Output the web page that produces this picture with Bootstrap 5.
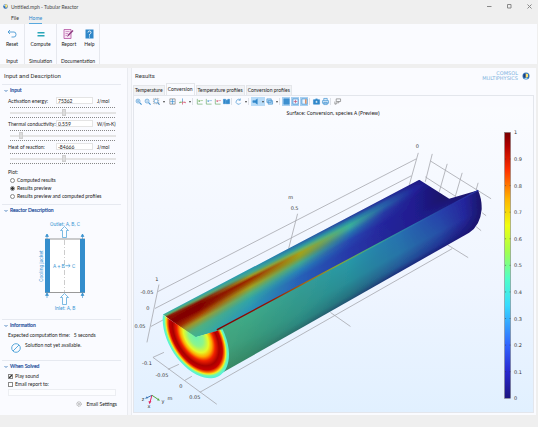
<!DOCTYPE html>
<html lang="en">
<head>
<meta charset="utf-8">
<meta name="viewport" content="width=device-width, initial-scale=1">
<title>Untitled.mph - Tubular Reactor</title>
<link rel="stylesheet" href="https://cdn.jsdelivr.net/npm/bootstrap@5.3.0/dist/css/bootstrap.min.css">
<style>
body{font-family:Lato,"Liberation Sans",sans-serif;font-size:5px;line-height:8px;color:#222;background:#efefef}
svg{display:block;overflow:visible}
button,input{font:inherit;color:inherit}
.plain{border:0;background:none;padding:0}
.titlebar{height:13px;padding:0 0 0 3px;gap:3px;color:#444}
.winbtn{width:17px;height:12px}
.menu{height:11px;padding-left:11px;gap:10px}
.menu a{color:#333;text-decoration:none;line-height:11px}
.menu a.current{color:#2b86cc;border-bottom:1px solid #58a8de}
.ribbon{background:#fafbff;height:40px;margin-right:1px}
.group{border-right:1px solid #e6e8ee;padding:5px 0 0}
.group .tools{height:28px}
.group .tools button{display:flex;flex-direction:column;align-items:center;line-height:8px}
.group .tools svg{margin-bottom:1px}
.g1{width:25px}.g2{width:32px}.g3{width:43px}
.side{width:127px;background:#fafbff;padding:0 6px 4px 2px;flex:none}
.divider{width:5px;flex:none;background:#f6f7fb;border-left:1px solid #e9ebf0;border-right:1px solid #e9ebf0}
.work{background:#fafbff;padding:0 2px 2px 1px;margin-right:2px;min-width:0}
.h-main{font-family:Roboto,sans-serif;font-size:6px;line-height:14px;margin:0;padding:1px 0 0 2px;font-weight:400;color:#333}
.side .h-main{padding-bottom:1px}
.sect{font-size:5px;line-height:9px;color:#2c55a0;margin:0;padding:1px 0 1px 2px;border-top:1px solid #e6e9f0;font-weight:400;-webkit-text-stroke:.2px #2c55a0}
.sect svg{display:inline-block;margin-right:2px}
.field{padding:0 2px 0 6px;height:9px}
.field label{width:48px;white-space:nowrap}
.field input{width:37px;height:7px;border:1px solid #e4e4e4;background:#fff;padding:0 1px;line-height:5px}
.field span{margin-left:4px}
.slide{margin:2px 5px 1px 8px;height:11px}
.dots{height:1px;background:repeating-linear-gradient(90deg,#888 0 1px,transparent 1px 2px)}
.slide input{appearance:none;display:block;width:100%;height:9px;margin:0;background:linear-gradient(#e4e4e4,#e4e4e4) center/100% 2px no-repeat}
.slide input::-webkit-slider-thumb{appearance:none;width:4px;height:7px;background:#dcdcdc;border:1px solid #cfcfcf}
.indent{margin-left:6px}
.choice{padding-left:8px;gap:2px;height:8px}
.choice input{appearance:none;width:5px;height:5px;border:1px solid #888;background:#fff;margin:0}
.choice input[type=radio]{border-radius:50%}
.choice input[type=radio]:checked{background:radial-gradient(#333 0 1px,#fff 2px)}
.choice input[type=checkbox]:checked{background:linear-gradient(135deg,#fff 25%,#333 45%,#333 60%,#fff 75%)}
.side .choice.box{padding-left:6px}
.mail{display:block;width:108px;height:7px;border:1px solid #eceef2;background:#fcfdff;margin:1px 0 0 6px}
.notice{margin:2px 0 6px 8px;gap:5px}
.brand-row{padding-top:3px;gap:4px}
.brand{font:5px/5px "DejaVu Sans",sans-serif;color:#7db3de;text-align:right}
.plot-tabs{gap:1px;height:12px}
.plot-tabs button{background:#f1f2f5;border:1px solid #e4e6ea;border-bottom:0;padding:0 1px;line-height:9px;white-space:nowrap}
.plot-tabs button.current{background:#fafbff;line-height:11px}
.canvas-box{border:1px solid #e3e6ec;background:linear-gradient(#fbfcff,#eff5ff 60%,#e1f0ff)}
.tb{height:11px;background:#fafbff}
.ic{width:9px;height:9px;display:flex;align-items:center;justify-content:center;flex:none}
.ic.w{width:12px}
.ic.on{width:8px;background:#a9d0f1;margin-right:1px}
.dd{width:5px;height:9px;flex:none;display:flex;align-items:center;justify-content:center}
.dd::after{content:"";border:1px solid transparent;border-top:2px solid #444;border-bottom:0}
.hot{background:#b9dcf8}
.div3{width:3px;height:7px;border-left:1px solid #dde1e8;flex:none}
.foot{height:12px}
.lbl text{font-family:"DejaVu Sans",sans-serif;font-size:5px;fill:#333}
.lbl .caption-line{font-family:"Noto Sans",sans-serif;fill:#111}
</style>
<script src="https://cdn.jsdelivr.net/npm/bootstrap@5.3.0/dist/js/bootstrap.bundle.min.js"></script>
</head>
<body class="d-flex flex-column min-vh-100">
<header>
  <div class="titlebar d-flex align-items-center">
    <svg width="5" height="5" viewBox="0 0 10 10" aria-hidden="true"><circle cx="5" cy="5" r="4.500" fill="#2767b5"/><path d="M4 1h4l1 5-4 2z" fill="#ffe67a"/><path d="M1 3l3-2v4z" fill="#9bd0ff"/></svg>
    <span class="me-auto">Untitled.mph - Tubular Reactor</span>
    <button class="plain winbtn d-flex align-items-center justify-content-center" aria-label="Minimize"><svg width="5" height="5"><path d="M0 2.500h4.500" stroke="#888"/></svg></button>
    <button class="plain winbtn d-flex align-items-center justify-content-center" aria-label="Maximize"><svg width="5" height="5"><path d="M.5.5h3.500v3.500h-3.500z" fill="none" stroke="#888"/></svg></button>
    <button class="plain winbtn d-flex align-items-center justify-content-center" aria-label="Close"><svg width="5" height="5"><path d="M.5.5l4 4m0-4l-4 4" stroke="#888"/></svg></button>
  </div>
  <nav class="menu d-flex"><a href="#">File</a><a class="current" href="#">Home</a></nav>
</header>
<div class="ribbon d-flex mb-1">
  <div class="group g1 text-center"><div class="tools d-flex justify-content-center">
    <button class="plain"><svg width="10" height="10" viewBox="0 0 20 20" fill="none" stroke="#4a9ad4" stroke-width="1.800"><path d="M6 2L2 6l4 4M2 6h12q4 0 4 5t-4 5H9"/></svg>Reset</button></div>Input</div>
  <div class="group g2 text-center"><div class="tools d-flex justify-content-center">
    <button class="plain"><svg width="10" height="10" viewBox="0 0 20 20"><path d="M3 7.500h14M3 13.500h14" stroke="#28a6b8" stroke-width="3.200"/></svg>Compute</button></div>Simulation</div>
  <div class="group g3 text-center"><div class="tools d-flex justify-content-center gap-2">
    <button class="plain"><svg width="11" height="10" viewBox="0 0 22 20"><path d="M2 1h14v18H2z" fill="#f6e4f3" stroke="#b04a9c" stroke-width="1.500"/><path d="M5 5h8M5 9h5M5 13h3" stroke="#b04a9c"/><path d="M8 16l2-5 9-9 2 2-9 9z" fill="#8e3a80"/></svg>Report</button>
    <button class="plain"><svg width="9" height="10" viewBox="0 0 18 20"><path d="M1 1h16v18H1z" fill="#2e86c8"/><path d="M6 7q0-3 3-3t3 3q0 2-3 4v2m0 2v2" fill="none" stroke="#fff" stroke-width="1.800"/></svg>Help</button></div>Documentation</div>
</div>
<main class="d-flex flex-grow-1">
<aside class="side">
  <h1 class="h-main">Input and Description</h1>
  <h2 class="sect"><svg width="4" height="4"><path d="M.5 1l1.500 1.500L3.500 1" fill="none" stroke="#2c6cb0" stroke-width=".8"/></svg>Input</h2>
  <div class="field d-flex align-items-center"><label for="ae">Activation energy:</label><input id="ae" value="75362"><span>J/mol</span></div>
  <div class="slide"><div class="dots"></div><input type="range" aria-label="Activation energy" value="51"><div class="dots"></div></div>
  <div class="field d-flex align-items-center"><label for="tc">Thermal conductivity:</label><input id="tc" value="0.559"><span>W/(m·K)</span></div>
  <div class="slide"><div class="dots"></div><input type="range" aria-label="Thermal conductivity" value="9"><div class="dots"></div></div>
  <div class="field d-flex align-items-center"><label for="hr">Heat of reaction:</label><input id="hr" value="-84666"><span>J/mol</span></div>
  <div class="slide"><div class="dots"></div><input type="range" aria-label="Heat of reaction" value="51"><div class="dots"></div></div>
  <div class="indent mt-1">Plot:</div>
  <div class="choice d-flex align-items-center"><input type="radio" name="p" id="p1"><label for="p1">Computed results</label></div>
  <div class="choice d-flex align-items-center"><input type="radio" name="p" id="p2" checked><label for="p2">Results preview</label></div>
  <div class="choice d-flex align-items-center mb-1"><input type="radio" name="p" id="p3"><label for="p3">Results preview and computed profiles</label></div>
  <h2 class="sect"><svg width="4" height="4"><path d="M.5 1l1.500 1.500L3.500 1" fill="none" stroke="#2c6cb0" stroke-width=".8"/></svg>Reactor Description</h2>
  <svg width="100%" height="103" viewBox="2 216 119 103" font-family="Roboto,sans-serif" font-size="5" fill="#3d97d3">
    <path d="M49 239h32v53H49z" fill="#fff"/><path d="M45 239h40M45 292.500h40" stroke="#999"/>
    <path d="M64.500 240v52" stroke="#aaa" stroke-width=".6" stroke-dasharray="5 2 1 2"/>
    <path d="M45 239h5v53.500h-5zM80 239h5v53.500h-5z" fill="#338dcc"/>
    <g stroke="#338dcc" stroke-width=".6"><path d="M47 239v-5m35.500 5v-5M47 298v-5m35.500 5v-5"/><path d="M47 234l-1.500 2.500h3zM82.500 234l-1.500 2.500h3zM47 293l-1.500 2.500h3zM82.500 293l-1.500 2.500h3z"/></g>
    <path id="arr" d="M62.500 237.500v-7h-2l4-4 4 4h-2v7z" fill="#fcfdff" stroke="#5aa8dc" stroke-width=".8"/>
    <use href="#arr" y="67"/>
    <text x="65" y="225.500" text-anchor="middle">Outlet: A, B, C</text><text x="65" y="309.500" text-anchor="middle">Inlet: A, B</text>
    <text x="53" y="267.500">A + B</text><text x="72" y="267.500">C</text><path d="M65.500 265.700h4.500m-1.500-1.500l1.700 1.500-1.700 1.500" fill="none" stroke="#3d97d3" stroke-width=".7"/>
    <text transform="translate(42.500 266) rotate(-90)" text-anchor="middle">Cooling jacket</text>
  </svg>
  <h2 class="sect"><svg width="4" height="4"><path d="M.5 1l1.500 1.500L3.500 1" fill="none" stroke="#2c6cb0" stroke-width=".8"/></svg>Information</h2>
  <div class="indent">Expected computation time: &nbsp; 5 seconds</div>
  <div class="notice d-flex"><svg width="10" height="13" viewBox="0 0 10 13"><g fill="none" stroke="#5aa9dc"><circle cx="6" cy="7" r="4.300"/><path d="M3 10l6-6"/></g></svg><span>Solution not yet available.</span></div>
  <h2 class="sect"><svg width="4" height="4"><path d="M.5 1l1.500 1.500L3.500 1" fill="none" stroke="#2c6cb0" stroke-width=".8"/></svg>When Solved</h2>
  <div class="choice box d-flex align-items-center"><input type="checkbox" id="c1" checked><label for="c1">Play sound</label></div>
  <div class="choice box d-flex align-items-center"><input type="checkbox" id="c2"><label for="c2">Email report to:</label></div>
  <input class="mail" aria-label="Email address">
  <div class="d-flex justify-content-end me-1 mt-1"><button class="plain d-flex align-items-center"><svg class="me-1" width="6" height="6" viewBox="0 0 12 12" fill="none" stroke="#888"><circle cx="6" cy="6" r="4.500" stroke-width="1.500" stroke-dasharray="2 1"/><circle cx="6" cy="6" r="2"/></svg>Email Settings</button></div>
</aside>
<div class="divider"></div>
<section class="work flex-grow-1 d-flex flex-column">
  <div class="d-flex align-items-start justify-content-between pe-1">
    <h1 class="h-main">Results</h1>
    <div class="brand-row d-flex align-items-center"><div class="brand"><div>COMSOL</div><div>MULTIPHYSICS</div></div><svg width="8" height="8" viewBox="0 0 16 16"><circle cx="8" cy="8" r="7" fill="#3377bb"/><path d="M7 3l5 1v6l-5 2z" fill="#ffe36e"/><path d="M3 5l4-2v9l-4-2z" fill="#1b3c80"/><path d="M4 13q5 3 8-1l-5 0z" fill="#a8d6f5"/></svg></div>
  </div>
  <div class="plot-tabs d-flex align-items-end"><button>Temperature</button><button class="current">Conversion</button><button>Temperature profiles</button><button>Conversion profiles</button></div>
  <div class="canvas-box flex-grow-1">
    <div class="tb d-flex align-items-center" id="tb"></div>
    <svg id="plot" width="100%" viewBox="134 107 400 306">
      <defs>
        <clipPath id="inner"><path d="M163 315L420 180 450 199 479 190.500 223 330 195 338z"/></clipPath>
        <clipPath id="outer"><path d="M216 331L479 190.500Q483 200 482.500 210 481 226 470 233L300 329.500 218 376z"/></clipPath>
        <filter id="soft"><feGaussianBlur stdDeviation=".6"/></filter>
        <radialGradient id="face" gradientUnits="userSpaceOnUse" cx="0" cy="0" r="1">
          <stop offset="0" stop-color="#6df2b0"/><stop offset=".22" stop-color="#8cf58c"/><stop offset=".38" stop-color="#e6fa28"/><stop offset=".48" stop-color="#ffa800"/><stop offset=".58" stop-color="#f02000"/><stop offset=".7" stop-color="#a80000"/><stop offset=".8" stop-color="#c80000"/><stop offset=".86" stop-color="#ff7a00"/><stop offset=".9" stop-color="#f0f020"/><stop offset=".94" stop-color="#70f8b0"/><stop offset="1" stop-color="#50f0e0"/>
        </radialGradient>
        <linearGradient id="jet" x1="0" y1="1" x2="0" y2="0"><stop offset="0" stop-color="#1c1480"/><stop offset=".1" stop-color="#2828d0"/><stop offset=".2" stop-color="#3064ff"/><stop offset=".35" stop-color="#38dcff"/><stop offset=".45" stop-color="#50ffc8"/><stop offset=".55" stop-color="#a0ff50"/><stop offset=".65" stop-color="#f0ff10"/><stop offset=".75" stop-color="#ffb400"/><stop offset=".86" stop-color="#ff3000"/><stop offset=".95" stop-color="#b00000"/><stop offset="1" stop-color="#780000"/></linearGradient>
        <linearGradient id="edge" gradientUnits="userSpaceOnUse" x1="217" y1="0" x2="479" y2="0"><stop offset="0" stop-color="#800000"/><stop offset=".2" stop-color="#981000"/><stop offset=".34" stop-color="#a86810"/><stop offset=".46" stop-color="#88a830"/><stop offset=".6" stop-color="#38a890"/><stop offset=".75" stop-color="#2870b0"/><stop offset=".9" stop-color="#2430a0"/></linearGradient>
      </defs>
      <path fill="none" stroke="#a6a7ad" stroke-width=".8" d="M158 292L417 159M155 309L412 176M151 327L164 320M159 285L147 343M298 214L289 249M419 153L410 185M433 154L426 182M448 164L440 192M463 173L456 197M479 183L477 190M431 161L492 199M426 177L457 197M483 213L487 216M477 227L482 231M448 245L469 258M453 249L200 393M331 313L351 327M153 358L217 405M153 358L164 353M168 370L179 365M185 381L192 377"/>
      <g clip-path="url(#inner)"><g id="gi" filter="url(#soft)"></g></g>
      <g clip-path="url(#outer)"><g id="go" filter="url(#soft)"></g></g>
      <path d="M217 330.500L479 190.500" stroke="url(#edge)" stroke-width="1.300"/>
      <path transform="matrix(-33 -22 4 -35 196 337.500)" d="M0 0L1 0A1 1 0 1 0 -.73 .68z" fill="url(#face)"/>
      <rect x="505.500" y="132.500" width="6" height="266.500" fill="url(#jet)" stroke="#777" stroke-width=".5"/>
      <g class="lbl" id="ticks"><text class="caption-line" x="333.500" y="115.500" text-anchor="middle">Surface: Conversion, species A (Preview)</text></g>
      <g fill="none" stroke-width="1"><path d="M152 396l-5 2.500" stroke="#3b78b8"/><path d="M152 396l-2 7" stroke="#e0245e"/><path d="M152 396l6 4" stroke="#55a53c"/></g>
      <path d="M145 399.500l2-2.500 1 2z" fill="#3b78b8"/><path d="M149.500 405l-1-3h3z" fill="#e0245e"/><path d="M160 401.500l-3-.5 1.500-2z" fill="#55a53c"/>
    </svg>
  </div>
</section>
</main>
<div class="foot"></div>
<script>
const NS='http://www.w3.org/2000/svg',plot=document.getElementById('plot'),defs=plot.querySelector('defs');
const el=(n,a,p)=>{const e=document.createElementNS(NS,n);for(const k in a)e.setAttribute(k,a[k]);p.append(e);return e};
const rgb=h=>[1,3,5].map(i=>parseInt(h.substr(i,2),16));
// Colour at depth d below the top edge, from a list of [depth, colour] samples
function at(list,d){let a=list[0],b=a;for(const p of list){b=p;if(p[0]>=d)break;a=p}
  const f=b[0]===a[0]?0:Math.min(1,(d-a[0])/(b[0]-a[0])),A=rgb(a[1]),B=rgb(b[1]);
  return 'rgb('+A.map((v,i)=>Math.round(v+(B[i]-v)*f))+')'}
// Paints a surface as lengthwise bands; every band runs from its own depth down to the bottom
function surface(group,cols,x0,y0,x1,y1,depth){
  for(let i=-1;i<=depth;i++){
    const id=group+i,g=el('linearGradient',{id,gradientUnits:'userSpaceOnUse',x1:x0,x2:x1,y1:0,y2:0},defs);
    for(const [x,l] of cols)el('stop',{offset:(x-x0)/(x1-x0),'stop-color':at(l,Math.max(0,i))},g);
    const d=i<0?-4:i;
    el('path',{d:`M${x0} ${y0+d}L${x1} ${y1+d}V420H${x0}z`,fill:`url(#${id})`},document.getElementById(group));
  }}
surface('gi',[
 [165,[[0,'#38b0a8'],[2,'#60a860'],[4,'#901000'],[12,'#800000'],[20,'#981800'],[26,'#a09020'],[34,'#50b080']]],
 [200,[[0,'#30a8b0'],[3,'#68a060'],[6,'#881000'],[9,'#800000'],[14,'#880400'],[19,'#a84000'],[24,'#a09828'],[31,'#50b080'],[44,'#36b0a0']]],
 [250,[[0,'#2898b0'],[4,'#48a888'],[7,'#a09820'],[10,'#9c2800'],[13,'#a05000'],[18,'#a0a020'],[24,'#50b080'],[30,'#30a4a8'],[42,'#2a90b8']]],
 [300,[[0,'#2868a8'],[4,'#309ca0'],[7,'#70b060'],[10,'#a8a018'],[14,'#90a028'],[20,'#40a890'],[27,'#2880b8'],[34,'#2860b8'],[43,'#2860b8']]],
 [350,[[0,'#2840a0'],[4,'#2884a8'],[8,'#38b098'],[11,'#38a8a0'],[16,'#2878b0'],[23,'#2848b0'],[32,'#2838a8'],[43,'#2838a8']]],
 [385,[[0,'#242c98'],[4,'#2858a8'],[8,'#2860a8'],[14,'#2838a4'],[24,'#24249c'],[43,'#242898']]],
 [415,[[0,'#201c88'],[6,'#22249c'],[14,'#201c90'],[43,'#201c90']]],
 [445,[[0,'#1a1468'],[30,'#1a1468'],[43,'#201c88']]],
 [480,[[0,'#1a1468']]]],163,315,480,148.5,44);
surface('go',[
 [216,[[0,'#44a880'],[20,'#44a47c'],[45,'#3c8c64']]],
 [250,[[0,'#3eaa88'],[25,'#3a9c7c'],[47,'#348464']]],
 [300,[[0,'#349c94'],[25,'#309488'],[36,'#2c8880'],[44,'#286868']]],
 [350,[[0,'#2898a8'],[22,'#288c98'],[36,'#247080'],[42,'#204c70']]],
 [400,[[0,'#2870b0'],[20,'#2874a8'],[33,'#245898'],[40,'#1c2878']]],
 [440,[[0,'#2840ac'],[20,'#2850a8'],[33,'#203494'],[40,'#1a1870']]],
 [465,[[0,'#24249c'],[20,'#24289c'],[40,'#1a1470']]],
 [483,[[0,'#1a1468']]]],216,331,483,188.5,50);
const T=document.getElementById('ticks');
const label=(x,y,s,a='middle')=>{el('text',{x,y:y+2,'text-anchor':a},T).textContent=s};
[[157,279,'1'],[147,292,'-0.05'],[148,309,'0'],[140,327,'0.05'],[147,364,'-0.1'],[162,376,'-0.05'],[181,387,'0'],[195,398,'0.05'],[170,399,'m'],[295,208,'0.5'],[291,197,'m'],[418,146,'0'],[143,400,'z'],[149,407,'x'],[163,402,'y']].forEach(a=>label(...a));
for(let i=0;i<=10;i++){const y=399-i*26.65;label(515,y,i===0?'0':i===10?'1':'0.'+i,'start');
  if(i%10)el('path',{d:`M506 ${y}h1m3.500 0h1`,stroke:'#333','stroke-width':.5},plot)}
// Toolbar icons, drawn on a 16-unit square
const B='#3d8fcf',lens='<circle cx="7" cy="7" r="4.500"/><path d="M10.500 10.500L15 15" stroke-width="2.500"/>';
const ax=c=>`<path d="M3 2v12h12" stroke="#68a868"/><path d="M6 5l3 4m0-4l-3 4m5-4l2 2 2-2" stroke="${c}"/>`;
const I={in:lens+'<path d="M5 7h4M7 5v4"/>',out:lens+'<path d="M5 7h4"/>',box:lens+'<path d="M1 1h12v12H1z" stroke-dasharray="2 2" stroke="#888"/>',
 ext:'<path d="M2 2h12v12H2z" stroke="#777"/><path d="M8 3v10M3 8h10M6 5l2-2 2 2M6 11l2 2 2-2"/>',
 axes:'<path d="M8 9V1" stroke="#3d8fcf"/><path d="M8 9l-7 2 2-3" stroke="#55a53c"/><path d="M8 9l7 2-2-3M8 9v6" stroke="#d04060"/>',
 xy:ax('#55a53c'),yz:ax('#3d8fcf'),zx:ax('#d04060'),cam:'<path d="M1 3h5v10H1zM7 5h4v8H7zM11 3h4v10h-4z" fill="#2e86c8"/>',
 rot:'<path d="M12 5A5.500 5.500 0 1 0 13 11M12 1v4H8"/>',snd:'<path d="M2 6h5l5-4v12L7 10H2z" fill="#2e86c8"/>',
 lay:'<path d="M2 2h10v8H2zM5 6h10v8H5z" fill="#b8daf4"/>',grid:'<path d="M2 2h12v12H2z" fill="#3d8fcf"/>',
 sc:'<path d="M2 2h12v12H2z" fill="#e8f4ff"/><path d="M4 8h8M8 4v8" stroke="#c05070"/>',leg:'<path d="M2 2h12v12H2z" fill="#e8f4ff"/><path d="M11 3v10" stroke="#e07030" stroke-width="2.500"/>',
 photo:'<path d="M1 4h4l1-2h4l1 2h4v10H1z" fill="#2e86c8"/><circle cx="8" cy="9" r="2.500" fill="#fff"/>',
 prn:'<path d="M4 6V1h8v5M1 6h14v6H1zM4 10h8v5H4z" fill="#d9ecfa"/>',win:'<path d="M5 2h10v6H5zM2 8v6h3v-3h6V8" stroke="#777"/>'};
document.getElementById('tb').innerHTML='in out box v ext:w axes v | xy yz zx cam | rot v | snd:hot v:hot lay v | grid:on sc:on leg:on | photo prn | win'.split(' ').map(k=>{
 const [n,c='']=k.split(':');
 if(n==='|')return '<span class="div3"></span>';
 if(n==='v')return `<button class="plain dd ${c}" aria-label="More"></button>`;
 return `<button class="plain ic ${c}" aria-label="${n}"><svg width="7" height="7" viewBox="0 0 16 16" fill="none" stroke="${B}" stroke-width="1.500">${I[n]}</svg></button>`}).join('');
</script>
</body>
</html>
